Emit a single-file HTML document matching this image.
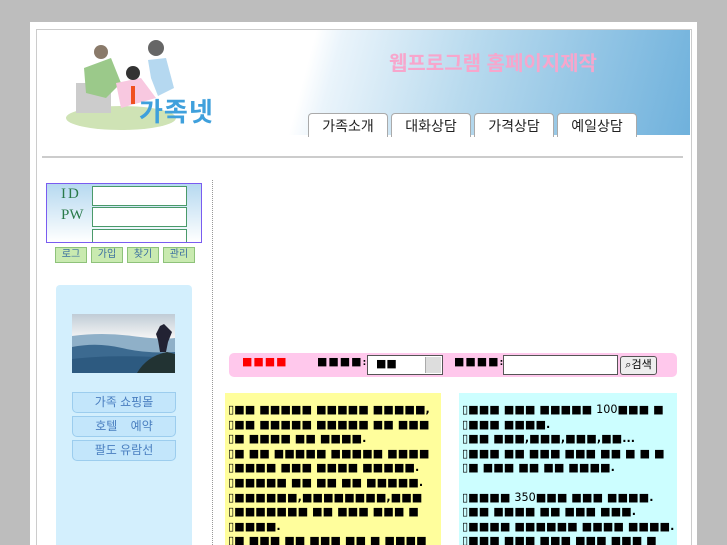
<!DOCTYPE html>
<html><head><meta charset="utf-8"><style>
html,body{margin:0;width:727px;height:545px;overflow:hidden}
body{background:#bdbdbd;font-family:"Liberation Sans","Noto Sans CJK KR",sans-serif;position:relative}
.a{position:absolute}
.sq{font-family:"DejaVu Sans",sans-serif;font-weight:bold}
.tab{position:absolute;top:113px;height:23px;width:78px;background:#fff;border:1px solid #aaa;border-bottom:none;border-radius:4px 4px 0 0;font-size:14px;text-align:center;line-height:24px;color:#222}
.btn{position:absolute;top:247px;width:30px;height:14px;background:#c9eab0;border:1px solid #8ec27a;font-size:10px;line-height:14px;text-align:center;color:#3a6ea0}
.mb{position:absolute;left:72px;width:102px;height:19px;background:#c3e6fb;border:1px solid #9ccdee;border-radius:0 0 5px 5px;font-size:12px;line-height:19px;text-align:center;color:#4a7fc0}
.txt{font-size:11.2px;line-height:14.6px;color:#000;padding:10px 3px 0 3px;overflow:hidden;white-space:nowrap}
</style></head><body>
<div class="a" style="left:30px;top:22px;width:667px;height:523px;background:#fff"></div>
<div class="a" style="left:36px;top:29px;width:654px;height:516px;border:1px solid #ccc;border-bottom:none"></div>
<div class="a" style="left:37px;top:30px;width:653px;height:107px;background:linear-gradient(105deg,#fff 0%,#fff 41%,#eaf4fb 45%,#b8daee 65%,#6fb1dc 100%)"></div>
<div class="a" style="left:37px;top:135px;width:653px;height:2px;background:#fff"></div>
<svg class="a" style="left:66px;top:38px" width="120" height="92">
<ellipse cx="55" cy="80" rx="55" ry="12" fill="#cfe3b5"/>
<rect x="10" y="45" width="35" height="30" fill="#ccc"/>
<path d="M18 30 L45 20 L55 45 L40 60 L20 55Z" fill="#9bc98a"/>
<circle cx="35" cy="14" r="7" fill="#8a7a6a"/>
<path d="M50 45 L75 40 L90 60 L55 70Z" fill="#f8c8e0"/>
<circle cx="67" cy="35" r="7" fill="#333"/>
<rect x="65" y="48" width="4" height="18" fill="#f05020"/>
<path d="M82 22 L100 20 L108 50 L92 58 L85 40Z" fill="#b5d8f0"/>
<circle cx="90" cy="10" r="8" fill="#666"/>
</svg>
<div class="a" style="left:139px;top:92px;font-size:26px;font-weight:bold;color:#3fa0dc;letter-spacing:1px">가족넷</div>
<div class="a" style="left:389px;top:47px;font-size:20px;color:#f7a6cc;font-weight:bold">웹프로그램 홈페이지제작</div>
<div class="tab" style="left:308px">가족소개</div>
<div class="tab" style="left:391px">대화상담</div>
<div class="tab" style="left:474px">가격상담</div>
<div class="tab" style="left:557px">예일상담</div>
<div class="a" style="left:42px;top:156px;width:641px;height:2px;background:#ccc"></div>
<div class="a" style="left:46px;top:183px;width:154px;height:58px;border:1px solid #7a5cf0;background:linear-gradient(#b6d9f0,#fff);overflow:hidden">
<div class="a" style="left:14px;top:2px;font-family:'Liberation Serif',serif;font-size:15px;color:#2a7a4a;letter-spacing:2px">ID</div>
<div class="a" style="left:14px;top:23px;font-family:'Liberation Serif',serif;font-size:15px;color:#2a7a4a">PW</div>
<div class="a" style="left:45px;top:2px;width:93px;height:18px;border:1px solid #4a9a6a;background:#fff"></div>
<div class="a" style="left:45px;top:23px;width:93px;height:18px;border:1px solid #4a9a6a;background:#fff"></div>
<div class="a" style="left:45px;top:45px;width:93px;height:18px;border:1px solid #4a9a6a;background:#fff"></div>
</div>
<div class="btn" style="left:55px">로그</div>
<div class="btn" style="left:91px">가입</div>
<div class="btn" style="left:127px">찾기</div>
<div class="btn" style="left:163px">관리</div>
<div class="a" style="left:212px;top:180px;width:0;height:365px;border-left:1px dotted #999"></div>
<div class="a" style="left:56px;top:285px;width:136px;height:260px;background:#d3effd;border-radius:4px 4px 0 0"></div>
<svg class="a" style="left:72px;top:314px" width="103" height="59">
<defs><linearGradient id="g" x1="0" y1="0" x2="0" y2="1"><stop offset="0" stop-color="#c0ccd6"/><stop offset=".4" stop-color="#f4f4f4"/><stop offset="1" stop-color="#9fb7c7"/></linearGradient></defs>
<rect width="103" height="59" fill="url(#g)"/>
<path d="M0 22 Q30 18 60 22 T103 24 V59 H0Z" fill="#8fb0c8"/>
<path d="M0 33 Q25 28 50 34 T103 38 V59 H0Z" fill="#3c6a90"/>
<path d="M0 45 Q40 40 103 44 V59 H0Z" fill="#2d5a80"/>
<path d="M65 59 Q75 42 95 38 L103 40 V59Z" fill="#233"/>
<path d="M88 38 L86 26 L84 20 L88 12 L92 10 L96 14 L100 18 L96 28 L94 38Z" fill="#223"/>
</svg>
<div class="mb" style="left:72px;top:392px">가족 쇼핑몰</div>
<div class="mb" style="left:72px;top:416px">호텔 &nbsp; &nbsp;예약</div>
<div class="mb" style="left:72px;top:440px">팔도 유람선</div>
<div class="a" style="left:229px;top:353px;width:448px;height:24px;background:#ffc8ec;border-radius:5px"></div>
<div class="a sq" style="left:242px;top:355px;font-size:11px;color:#f00;letter-spacing:1px">■■■■</div>
<div class="a sq" style="left:317px;top:355px;font-size:11px;letter-spacing:1px">■■■■<span style="font-size:9px">:</span></div>
<div class="a" style="left:367px;top:355px;width:74px;height:18px;border:1px solid #555;background:#fff"><span class="sq" style="position:absolute;left:8px;top:1px;font-size:11px">■■</span><div class="a" style="right:1px;top:1px;width:15px;height:16px;background:#ddd;border-left:1px solid #aaa"></div></div>
<div class="a sq" style="left:454px;top:355px;font-size:11px;letter-spacing:1px">■■■■<span style="font-size:9px">:</span></div>
<div class="a" style="left:503px;top:355px;width:113px;height:18px;border:1px solid #555;background:#fff"></div>
<div class="a" style="left:620px;top:356px;width:35px;height:17px;border:1px solid #555;border-radius:3px;background:#eee;font-size:11px;line-height:17px;text-align:center">⌕검색</div>
<div class="a txt sq" style="left:225px;top:393px;width:210px;height:152px;background:#fffe9c">▯■■ ■■■■■ ■■■■■ ■■■■■,<br>▯■■ ■■■■■ ■■■■■ ■■ ■■■<br>▯■ ■■■■ ■■ ■■■■.<br>▯■ ■■ ■■■■■ ■■■■■ ■■■■<br>▯■■■■ ■■■ ■■■■ ■■■■■.<br>▯■■■■■ ■■ ■■ ■■ ■■■■■.<br>▯■■■■■■,■■■■■■■■,■■■<br>▯■■■■■■■ ■■ ■■■ ■■■ ■<br>▯■■■■.<br>▯■ ■■■ ■■ ■■■ ■■ ■ ■■■■</div>
<div class="a txt sq" style="left:459px;top:393px;width:212px;height:152px;background:#ccfeff">▯■■■ ■■■ ■■■■■ <span style="font-weight:normal">100</span>■■■ ■<br>▯■■■ ■■■■.<br>▯■■ ■■■,■■■,■■■,■■...<br>▯■■■ ■■ ■■■ ■■■ ■■ ■ ■ ■<br>▯■ ■■■ ■■ ■■ ■■■■.<br><br>▯■■■■ <span style="font-weight:normal">350</span>■■■ ■■■ ■■■■.<br>▯■■ ■■■■ ■■ ■■■ ■■■.<br>▯■■■■ ■■■■■■ ■■■■ ■■■■.<br>▯■■■ ■■■ ■■■ ■■■ ■■■ ■</div>
</body></html>
